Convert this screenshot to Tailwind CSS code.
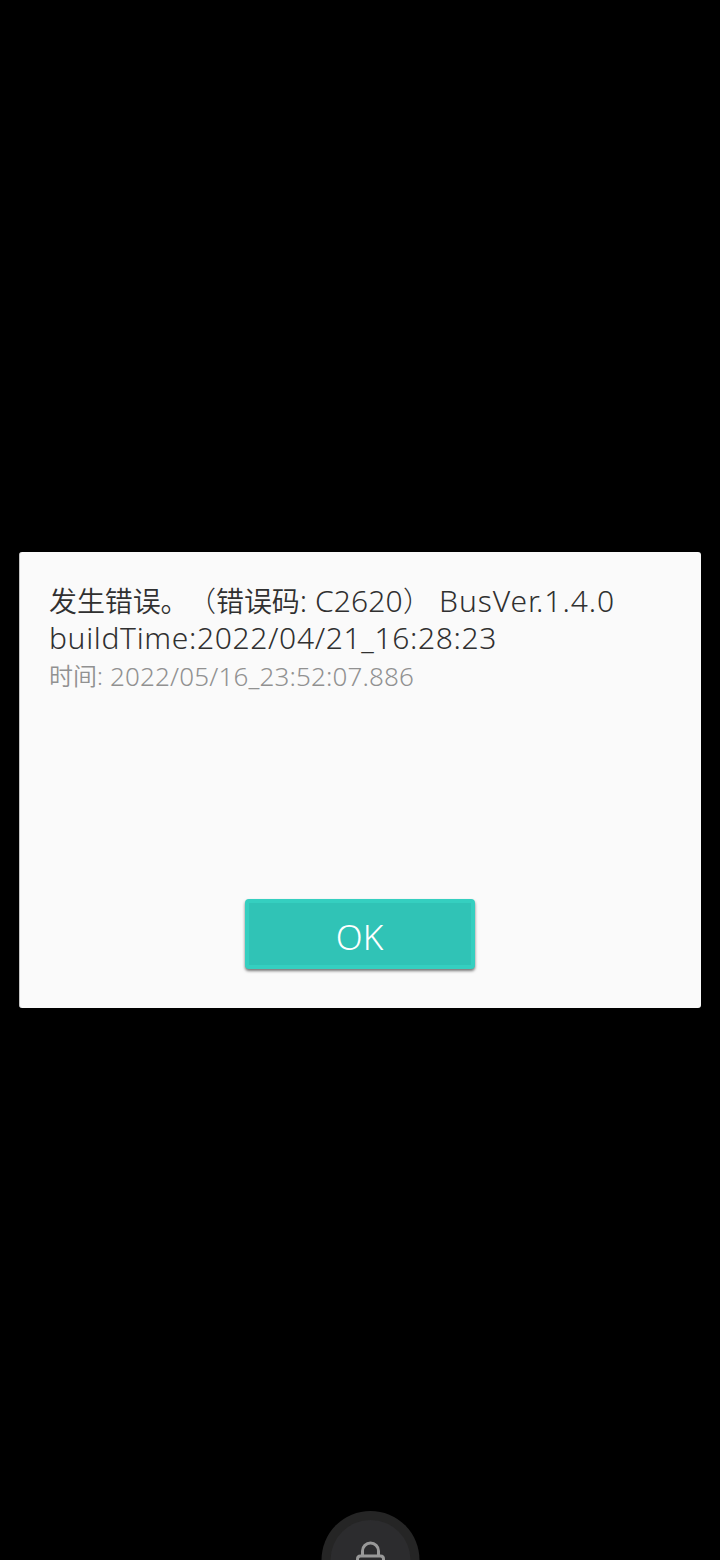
<!DOCTYPE html>
<html lang="zh-CN"><head><meta charset="utf-8"><title>错误</title><script src="https://cdn.jsdelivr.net/npm/@tailwindcss/browser@4"></script></head>
<body class="bg-black">
<main class="relative h-[1560px] w-[720px] overflow-hidden bg-black flex flex-col items-center pt-[552px] font-['Noto_Sans','Noto_Sans_CJK_SC',sans-serif]">
<section class="w-[682px] h-[456px] shrink-0 rounded-[3px] border-l border-[#c4c4c4] bg-[#fafafa] flex flex-col items-center">
<div class="w-full h-[347px] pl-[29px] pt-[30px] whitespace-nowrap text-[#303030]">
<p class="h-[37px] leading-[37px] flex text-[30px] font-[350]"><span class="flex w-[266px] font-['Noto_Sans_CJK_SC'] text-[28px] tracking-[-0.1px]"><span class="w-[139px]">发生错误。</span><span class="w-[28px] font-light [text-spacing-trim:space-all]">（</span><span>错误码</span><span class="font-['Noto_Sans'] font-light text-[30px]">:</span></span><span class="w-[88px] tracking-[0.1px]">C2620</span><span class="w-[36px] font-['Noto_Sans_CJK_SC'] text-[28px] font-light">）</span><span class="tracking-[0.95px]">BusVer.1.4.0</span></p>
<p class="h-[38px] leading-[38px] text-[30px] font-[350] tracking-[0.65px]">buildTime:2022/04/21_16:28:23</p>
<p class="h-[38px] leading-[38px] text-[26px] font-light flex text-[#919191]"><span class="w-[61px] text-[24px] font-[350]">时间:</span><span class="tracking-[0.16px]">2022/05/16_23:52:07.886</span></p>
</div>
<button class="mr-px w-[230px] h-[70px] rounded-[4px] border-4 border-[#35cfc0] bg-[#30c3b6] shadow-[0_2px_3px_#0008] text-white text-[35px] leading-[62px] font-light"><span class="block pt-[3px] pr-px">OK</span></button>
</section>
<svg class="absolute left-[321px] top-[1510px]" width="100" height="50" viewBox="0 0 100 50" fill="none"><circle cx="49.5" cy="50" r="49" fill="#252525"/><circle cx="49.5" cy="50" r="40" fill="#2c2c2e"/><path d="M41.5 46v-5a8 8 0 0 1 16 0v5M36.5 54v-5q0-3 3-3h20q3 0 3 3v5" stroke="#999" stroke-width="3"/></svg>
</main>
</body></html>
